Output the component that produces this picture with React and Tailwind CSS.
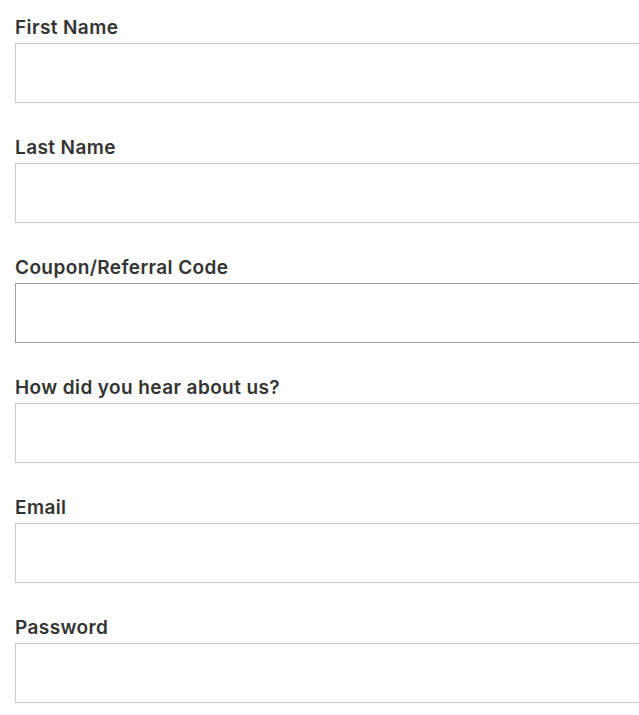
import React from 'react';

const FIELDS = [
  { id: 'first', label: 'First Name' },
  { id: 'last', label: 'Last Name' },
  { id: 'coupon', label: 'Coupon/Referral Code', active: true },
  { id: 'source', label: 'How did you hear about us?' },
  { id: 'email', label: 'Email', type: 'email' },
  { id: 'password', label: 'Password', type: 'password' },
];

function Field({ field }) {
  return (
    <div className="mb-[32px]">
      <label htmlFor={field.id} className="block h-[26px] mb-[2px] text-[19px] leading-[26px] tracking-[0.4px] font-semibold text-[#333]">
        {field.label}
      </label>
      <input
        id={field.id}
        type={field.type || 'text'}
        className={`block w-full h-[60px] border border-r-0 bg-white outline-none ${
          field.active ? 'border-[#9e9e9e]' : 'border-[#cacaca]'
        }`}
      />
    </div>
  );
}

export default function App() {
  return (
    <div className="min-h-[715px] bg-white pl-[15px] pt-[15px] overflow-hidden" style={{ fontFamily: 'Inter, "Open Sans", sans-serif' }}>
      <form>
        {FIELDS.map((f) => (
          <Field key={f.id} field={f} />
        ))}
      </form>
    </div>
  );
}
